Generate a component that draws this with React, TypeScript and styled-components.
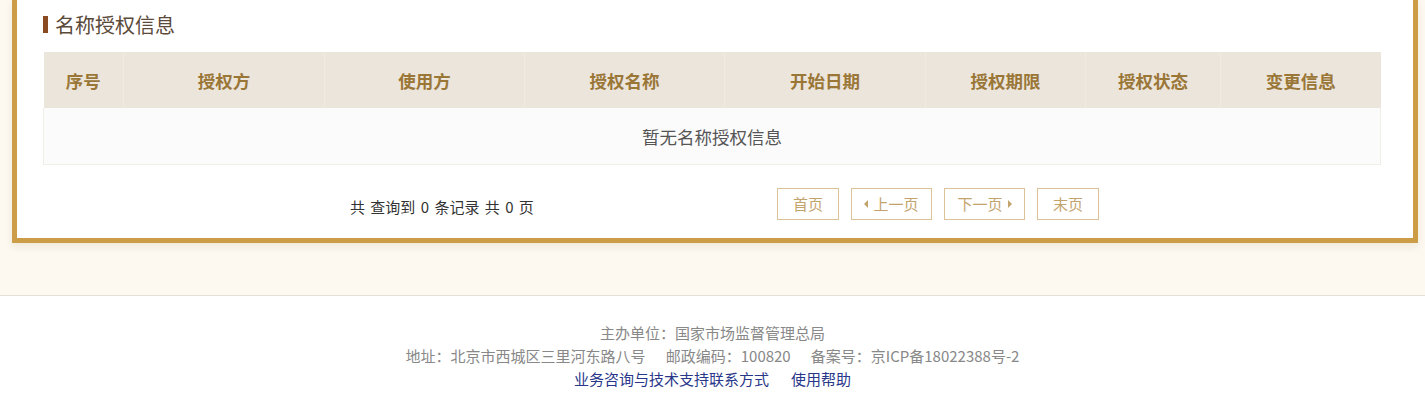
import styled, { createGlobalStyle } from "styled-components";

/* ── Global ── */
const GlobalStyle = createGlobalStyle`
  html, body {
    margin: 0;
    padding: 0;
    background: #fdf9f1;
    font-family: "Noto Sans CJK SC", "Noto Sans", "Liberation Sans", sans-serif;
  }
`;

/* ── Data ── */
const columns = [
  { title: "序号", width: 80 },
  { title: "授权方", width: 201 },
  { title: "使用方", width: 200 },
  { title: "授权名称", width: 200 },
  { title: "开始日期", width: 201 },
  { title: "授权期限", width: 160 },
  { title: "授权状态", width: 135 },
  { title: "变更信息", width: 160 },
];

/* ── Styled Components ── */
const Page = styled.div`
  width: 1425px;
  background: #fdf9f1;
`;

const Panel = styled.section`
  box-sizing: border-box;
  width: 1406px;
  margin-left: 12px;
  padding: 10px 26px 19px;
  background: #fff;
  border: 5px solid #cd9c47;
  border-top: none;
  box-shadow: 0 4px 8px rgba(120, 90, 40, 0.1);
`;

const SectionTitle = styled.h3`
  display: flex;
  align-items: center;
  gap: 7px;
  margin: 0 0 14px;
  height: 28px;
  font-size: 20px;
  font-weight: 400;
  color: #5b4a3a;

  &::before {
    content: "";
    width: 5px;
    height: 17px;
    background: #8a4b22;
  }
`;

const Table = styled.table`
  width: 1337px;
  border-collapse: collapse;
  table-layout: fixed;
`;

const HeadCell = styled.th`
  height: 56px;
  padding: 0;
  background: #ebe5dc;
  border-right: 1px solid #efebe4;
  color: #9a7637;
  font-size: 17.5px;
  font-weight: 700;
  text-align: center;

  &:last-child {
    border-right: none;
  }
`;

const EmptyCell = styled.td`
  height: 56px;
  padding: 0;
  background: #fbfbfb;
  border: 1px solid #f1eeea;
  border-top: none;
  color: #555;
  font-size: 17.5px;
  text-align: center;
`;

const Pager = styled.div`
  display: flex;
  align-items: center;
  margin-top: 23px;
  padding-left: 307px;
  height: 31px;
`;

const Summary = styled.span`
  font-size: 15px;
  color: #333;
  margin-top: 6px;
  width: 427px;
  white-space: pre;
  word-spacing: 2px;
`;

const PageButtons = styled.div`
  display: flex;
  gap: 12px;
`;

const PageButton = styled.button<{ $wide?: boolean }>`
  box-sizing: border-box;
  display: flex;
  align-items: center;
  justify-content: center;
  gap: 5px;
  width: ${(p) => (p.$wide ? "81px" : "62px")};
  height: 32px;
  padding: 0;
  background: #fff;
  border: 1px solid #dcc296;
  color: #c3a36c;
  font-family: inherit;
  font-size: 15px;
  cursor: pointer;
`;

const Caret = styled.span<{ $dir: "left" | "right" }>`
  width: 0;
  height: 0;
  border-top: 4px solid transparent;
  border-bottom: 4px solid transparent;
  ${(p) =>
    p.$dir === "left"
      ? "border-right: 4px solid #c3a36c;"
      : "border-left: 4px solid #c3a36c;"}
`;

const Footer = styled.footer`
  margin-top: 52px;
  padding: 25px 0 20px;
  background: #fff;
  border-top: 1px solid #e4dfd7;
  text-align: center;
  font-size: 15px;
  line-height: 23px;
  color: #888;
`;

const FooterLine = styled.div`
  white-space: pre;
`;

const FooterLink = styled.a`
  color: #28378a;
  text-decoration: none;
  margin: 0 11px;
`;

/* ── Component ── */
export default function App() {
  return (
    <Page>
      <GlobalStyle />
      <Panel>
        <SectionTitle>名称授权信息</SectionTitle>
        <Table>
          <colgroup>
            {columns.map((c) => (
              <col key={c.title} style={{ width: c.width }} />
            ))}
          </colgroup>
          <thead>
            <tr>
              {columns.map((c) => (
                <HeadCell key={c.title}>{c.title}</HeadCell>
              ))}
            </tr>
          </thead>
          <tbody>
            <tr>
              <EmptyCell colSpan={columns.length}>暂无名称授权信息</EmptyCell>
            </tr>
          </tbody>
        </Table>
        <Pager>
          <Summary>共 查询到 0 条记录 共 0 页</Summary>
          <PageButtons>
            <PageButton>首页</PageButton>
            <PageButton $wide>
              <Caret $dir="left" />
              上一页
            </PageButton>
            <PageButton $wide>
              下一页
              <Caret $dir="right" />
            </PageButton>
            <PageButton>末页</PageButton>
          </PageButtons>
        </Pager>
      </Panel>
      <Footer>
        <FooterLine>主办单位：国家市场监督管理总局</FooterLine>
        <FooterLine>
          地址：北京市西城区三里河东路八号      邮政编码：100820      备案号：京ICP备18022388号-2
        </FooterLine>
        <FooterLine>
          <FooterLink href="#">业务咨询与技术支持联系方式</FooterLink>
          <FooterLink href="#">使用帮助</FooterLink>
        </FooterLine>
      </Footer>
    </Page>
  );
}
